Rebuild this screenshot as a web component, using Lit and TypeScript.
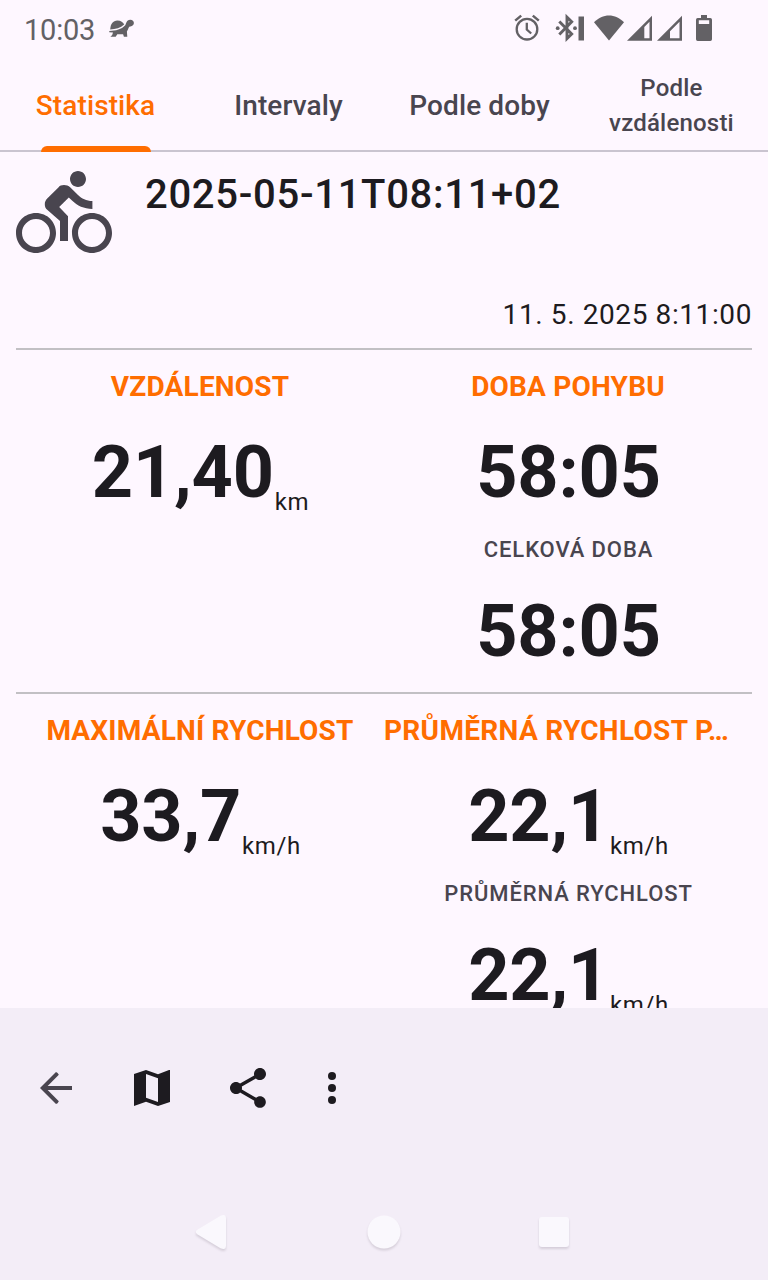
import { LitElement, html, css, svg, nothing } from "lit";
import { customElement, property } from "lit/decorators.js";
import { classMap } from "lit/directives/class-map.js";

@customElement("status-bar")
class StatusBar extends LitElement {
  static styles = css`
    :host { display: flex; height: 56px; align-items: center; box-sizing: border-box; padding: 0 54px 0 24px; color: #636165; font-size: 29px; }
    .clock { line-height: 34px; padding-top: 3px; letter-spacing: -0.2px; }
    .icon { display: block; fill: currentColor; }
    .turtle { margin-left: 14px; margin-top: 1px; }
    .tray { margin-left: auto; display: block; }
  `;
  render() {
    return html`
      <span class="clock">10:03</span>
      <svg class="icon turtle" width="26" height="20" viewBox="0 0 26 20">
        <path d="M1.2 10.5C1.4 5 4 1.400 8.400 1.400c3.400 0 5.800 1.800 6.800 4.200C11.500 9 6.500 10.300 1.200 10.500z"/>
        <path d="M.3 12C7 12 12.500 10.300 16 6.600 17.300 5.200 17 .7 21.300.7c2.200 0 3.600 1.500 3.600 3.400 0 2-1.500 3.200-3.400 3.300-1.200 0-1.600.6-2 1.700-.6 1.800-1 2.600-1.600 3.300l.4 5.400h-3.400l-.8-2.600H8.300l-1.600 2.600H1.400l1.800-1.800.8-2.400L.3 13.200z"/>
      </svg>
      <svg class="icon tray" width="200" height="30" viewBox="514 13 200 30">
        <g fill="none" stroke="currentColor">
          <circle cx="527" cy="29.200" r="10.300" stroke-width="2.300"/>
          <path d="M526.800 22.800v6.700l4.400 4" stroke-width="2.300"/>
          <path d="M515.200 20.600l6-5M532.800 15.600l6 5" stroke-width="2.500"/>
          <path d="M559.300 21.400l12.400 12.600-4.700 4.600V17.200l4.700 4.600-12.400 12.600" stroke-width="2.900"/>
        </g>
        <circle cx="557.700" cy="28.200" r="1.900"/><circle cx="575" cy="28.200" r="1.900"/>
        <path d="M578.500 16.500h5.500v24h-5.500z"/>
        <path d="M594 22.300c8.400-9.200 21.600-9.200 30 0L609 40.500z"/>
        <path fill-rule="evenodd" d="M627 40.800L652 15.700v25.100zM644.300 26.900v11.300h5.200V21.700z"/>
        <path fill-rule="evenodd" d="M657 40.800L682 15.700v25.100zM670 31.200v7h9.500V21.700z"/>
        <path fill-rule="evenodd" d="M701 15h6v3h3.300q1.700 0 1.700 1.700v19.600q0 1.700-1.700 1.700h-12.600q-1.700 0-1.700-1.700V19.700q0-1.700 1.700-1.700h3.300zM698.800 20.200v3.800h10.400v-3.800z"/>
      </svg>`;
  }
}

@customElement("tab-strip")
class TabStrip extends LitElement {
  static styles = css`
    :host { display: grid; grid-template-columns: 191px 195px 187px 195px; height: 96px; box-sizing: border-box; box-shadow: inset 0 -2px #cac4d0; font-weight: 500; color: #49454f; }
    .tab { display: grid; grid-template-rows: 90px 6px; justify-items: center; font-size: 28px; letter-spacing: 0.1px; }
    .label { align-self: center; padding-top: 8px; line-height: 35px; text-align: center; }
    .wrapped { font-size: 24px; letter-spacing: 0.2px; width: 150px; padding-top: 10px; padding-left: 2px; }
    .active { color: #ff6d00; }
    .indicator { width: 110px; height: 6px; border-radius: 6px 6px 0 0; background: #ff6d00; margin-left: 1px; }
  `;
  render() {
    const tabs = ["Statistika", "Intervaly", "Podle doby", "Podle vzdálenosti"];
    return tabs.map((name, i) => html`
      <div class=${classMap({ tab: true, active: i === 0 })}>
        <span class=${classMap({ label: true, wrapped: i === 3 })}>${name}</span>
        ${i === 0 ? html`<i class="indicator"></i>` : nothing}
      </div>`);
  }
}

@customElement("stat-item")
class StatItem extends LitElement {
  @property() label = "";
  @property() value = "";
  @property() unit = "";
  @property({ type: Boolean }) secondary = false;
  @property({ type: Boolean }) clipped = false;
  static styles = css`
    :host { display: block; color: #1d1b20; }
    .label { font-size: 28px; font-weight: 700; line-height: 36px; color: #ff6d00; text-align: center; white-space: nowrap; padding-top: 19px; letter-spacing: 0.2px; }
    .clipped { text-align: left; letter-spacing: 0.32px; }
    .secondary { font-size: 22px; font-weight: 500; line-height: 30px; color: #49454f; letter-spacing: 0.9px; padding-top: 14px; padding-left: 1px; }
    .reading { display: flex; justify-content: center; align-items: flex-end; height: 96px; margin-top: 20px; }
    .compact { margin-top: 19px; }
    .value { font-size: 72px; font-weight: 700; line-height: 96px; letter-spacing: -0.2px; margin-left: 1px; }
    .unit { font-size: 24px; line-height: 28px; letter-spacing: 0.6px; margin-bottom: 5px; margin-left: 1px; }
  `;
  render() {
    return html`
      <div class=${classMap({ label: true, secondary: this.secondary, clipped: this.clipped })}>${this.label}</div>
      <div class=${classMap({ reading: true, compact: this.secondary })}>
        <span class="value">${this.value}</span>${this.unit ? html`<span class="unit">${this.unit}</span>` : nothing}
      </div>`;
  }
}

@customElement("action-bar")
class ActionBar extends LitElement {
  static styles = css`
    :host { display: flex; flex-direction: column; height: 272px; background: #f3edf7; color: #1d1b20; }
    .actions { display: flex; align-items: center; height: 160px; padding-left: 32px; gap: 48px; }
    .icon { display: block; fill: currentColor; }
    .back { color: #49454f; }
    .more { margin-left: -12px; }
    .system { display: flex; justify-content: center; align-items: center; height: 96px; margin-top: auto; margin-bottom: 0; }
    .shapes { display: block; fill: #faf8fd; filter: drop-shadow(0 2px 1px rgba(60, 50, 70, 0.16)); }
  `;
  private icon(name: string, shape: unknown) {
    return html`<svg class="icon ${name}" width="48" height="48" viewBox="0 0 24 24">${shape}</svg>`;
  }
  render() {
    return html`
      <div class="actions">
        ${this.icon("back", svg`<path d="M20 11H7.830l5.590-5.590Q12.900 4.200 12 4L4 12l8 8q.9-.2 1.410-1.410L7.830 13H20z"/>`)}
        ${this.icon("map", svg`<path fill-rule="evenodd" d="M20.500 3L15 5.100 9 3 3 5v16l6-2.100 6 2.100 6-2V3zM15 19l-6-2.110V5l6 2.110z"/>`)}
        ${this.icon("share", svg`<path d="M18 16.080c-.76 0-1.440.3-1.960.77L8.910 12.700c.05-.23.09-.46.09-.7s-.04-.47-.09-.7l7.050-4.110c.54.5 1.250.81 2.040.81 1.660 0 3-1.340 3-3s-1.340-3-3-3-3 1.340-3 3c0 .24.04.47.09.7L8.040 9.810C7.500 9.310 6.790 9 6 9c-1.660 0-3 1.340-3 3s1.340 3 3 3c.79 0 1.500-.31 2.040-.81l7.120 4.160c-.05.21-.08.43-.08.65 0 1.610 1.310 2.920 2.920 2.920s2.920-1.310 2.920-2.920-1.310-2.920-2.920-2.920z"/>`)}
        ${this.icon("more", svg`<circle cx="12" cy="6" r="2"/><circle cx="12" cy="12" r="2"/><circle cx="12" cy="18" r="2"/>`)}
      </div>
      <div class="system">
        <svg class="shapes" width="384" height="40" viewBox="192 1212 384 40">
          <path d="M197.200 1229.800L220.500 1215.800q5.500-2.500 5.500 2.700v27q0 5.200-5.500 2.700L197.200 1234.200q-2.700-2.200 0-4.400z"/>
          <circle cx="384" cy="1232" r="16.500"/>
          <rect x="539" y="1217" width="30" height="30" rx="3"/>
        </svg>
      </div>`;
  }
}

@customElement("app-root")
class AppRoot extends LitElement {
  static styles = css`
    :host { display: flex; flex-direction: column; width: 768px; height: 1280px; overflow: hidden; background: #fef7ff; color: #1d1b20; font-family: Roboto, sans-serif; }
    .content { flex: 1; min-height: 0; overflow: hidden; padding: 0 16px; }
    .header { display: flex; height: 148px; gap: 32px; box-sizing: border-box; padding-top: 13px; }
    .bike { display: block; fill: #49454f; flex: none; }
    .title { font-size: 40px; font-weight: 500; line-height: 48px; letter-spacing: 0.7px; padding: 6px 0 0 1px; }
    .date { height: 48px; line-height: 36px; font-size: 28px; letter-spacing: 0.6px; text-align: right; box-sizing: border-box; margin-top: -4px; padding-top: 1px; margin-bottom: 4px; }
    .section { display: grid; grid-template-columns: 368px 368px; align-items: start; align-content: start; height: 344px; box-sizing: border-box; border-top: 2px solid #c2c0c4; }
  `;
  render() {
    return html`
      <status-bar></status-bar>
      <tab-strip></tab-strip>
      <main class="content">
        <div class="header">
          <svg class="bike" width="96" height="96" viewBox="0 0 24 24"><path d="M15.500 5.500c1.100 0 2-.9 2-2s-.9-2-2-2-2 .9-2 2 .9 2 2 2zM5 12c-2.800 0-5 2.200-5 5s2.200 5 5 5 5-2.200 5-5-2.200-5-5-5zm0 8.500c-1.900 0-3.500-1.600-3.500-3.500s1.600-3.500 3.500-3.500 3.500 1.600 3.500 3.500-1.600 3.500-3.500 3.500zm5.800-10l2.400-2.400.8.8c1.300 1.300 3 2.100 5.100 2.100V9c-1.500 0-2.700-.6-3.600-1.500l-1.900-1.900c-.5-.4-1-.6-1.600-.6s-1.100.2-1.400.6L7.800 8.400c-.4.4-.6.9-.6 1.400 0 .6.2 1.100.6 1.400L11 14v5h2v-6.200l-2.200-2.300zM19 12c-2.800 0-5 2.200-5 5s2.200 5 5 5 5-2.200 5-5-2.200-5-5-5zm0 8.500c-1.900 0-3.500-1.600-3.500-3.500s1.600-3.500 3.500-3.500 3.500 1.600 3.500 3.500-1.600 3.500-3.500 3.500z"/></svg>
          <div class="title">2025-05-11T08:11+02</div>
        </div>
        <div class="date">11. 5. 2025 8:11:00</div>
        <section class="section">
          <stat-item label="VZDÁLENOST" value="21,40" unit="km"></stat-item>
          <div>
            <stat-item label="DOBA POHYBU" value="58:05"></stat-item>
            <stat-item secondary label="CELKOVÁ DOBA" value="58:05"></stat-item>
          </div>
        </section>
        <section class="section">
          <stat-item label="MAXIMÁLNÍ RYCHLOST" value="33,7" unit="km/h"></stat-item>
          <div>
            <stat-item clipped label="PRŮMĚRNÁ RYCHLOST P…" value="22,1" unit="km/h"></stat-item>
            <stat-item secondary label="PRŮMĚRNÁ RYCHLOST" value="22,1" unit="km/h"></stat-item>
          </div>
        </section>
      </main>
      <action-bar></action-bar>`;
  }
}
